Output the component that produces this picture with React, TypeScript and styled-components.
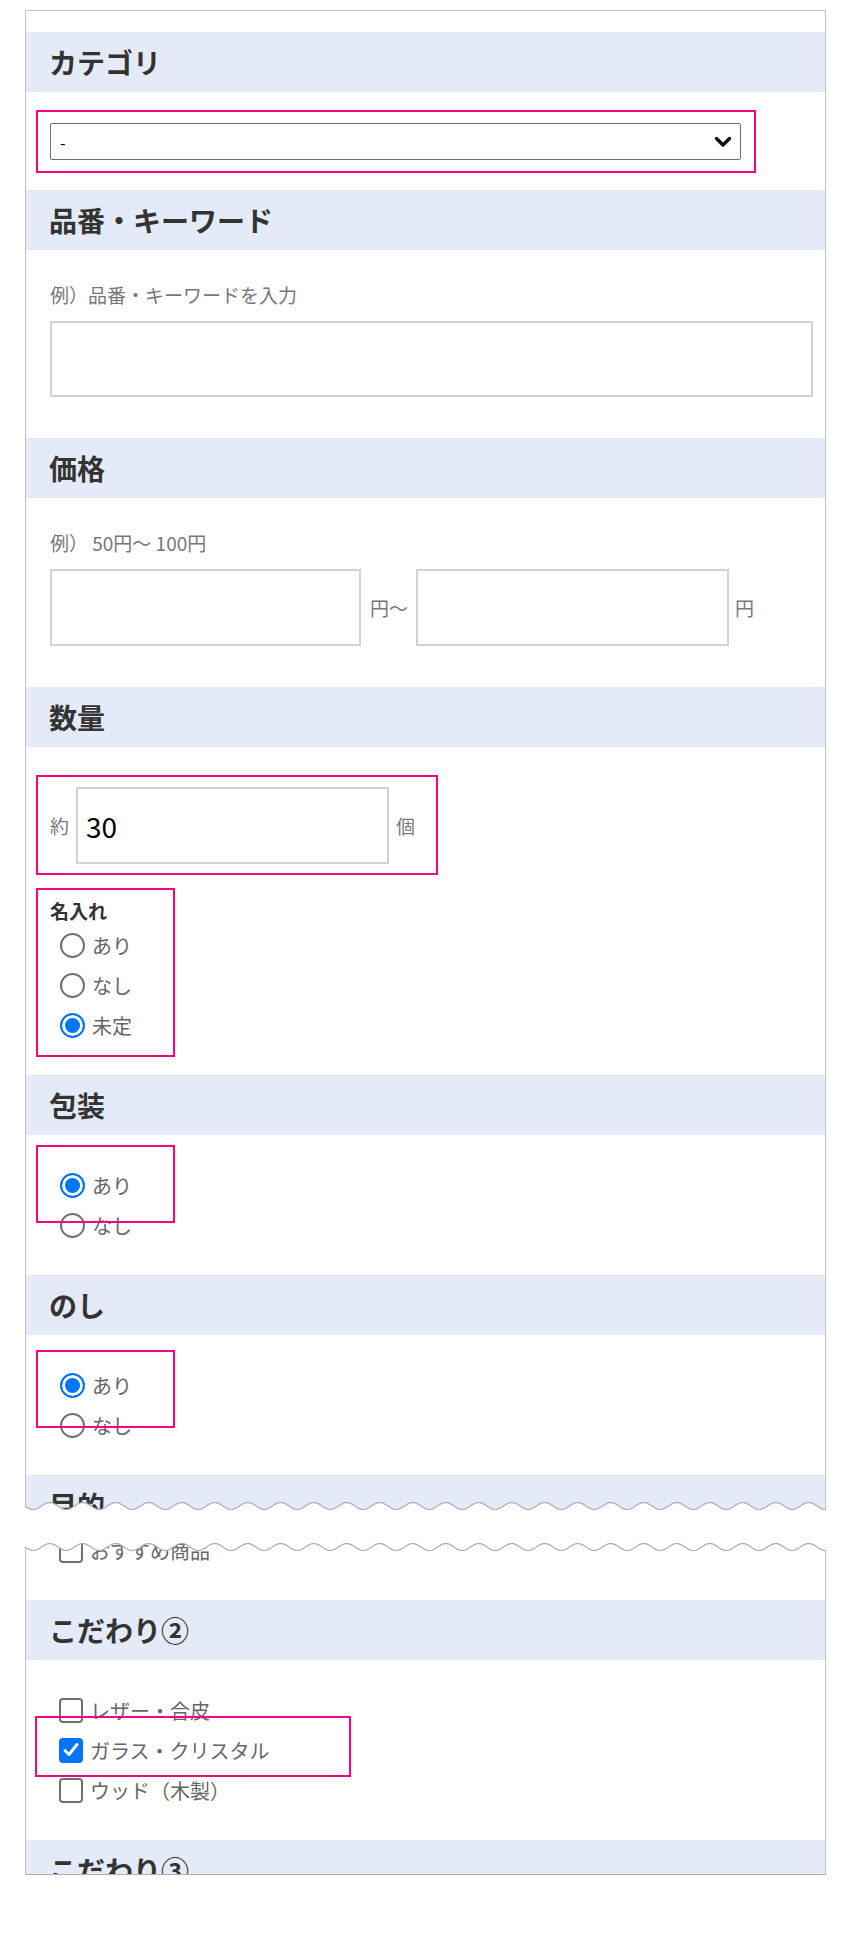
import React from 'react';
import styled, { createGlobalStyle } from 'styled-components';

const CARD_W = 801;
const WAVE_P = 33;
const WAVE_A = 3.5;

const waveY = (x: number, base: number) => base + WAVE_A * Math.sin((2 * Math.PI * x) / WAVE_P);

const wavePts = (base: number, reverse: boolean) => {
  const pts: string[] = [];
  for (let x = 0; x <= CARD_W; x += 1) pts.push(`${x}px ${waveY(x, base).toFixed(2)}px`);
  return reverse ? pts.reverse() : pts;
};

const topClip = (base: number) =>
  `polygon(0px -2px, ${CARD_W}px -2px, ${wavePts(base, true).join(', ')})`;

const bottomClip = (base: number, h: number) =>
  `polygon(${wavePts(base, false).join(', ')}, ${CARD_W}px ${h + 2}px, 0px ${h + 2}px)`;

const wavePath = (mid: number) => {
  let d = `M0 ${waveY(0, mid).toFixed(2)}`;
  for (let x = 1; x <= CARD_W; x += 1) d += ` L${x} ${waveY(x, mid).toFixed(2)}`;
  return d;
};

const GlobalStyle = createGlobalStyle`
  html, body { margin: 0; padding: 0; background: #fff; }
  body { font-family: "Noto Sans CJK JP", "Noto Sans", sans-serif; color: #333; }
  * { box-sizing: border-box; }
`;

const Page = styled.div`
  width: 850px;
  padding: 10px 0 0 25px;
  display: flex;
  flex-direction: column;
`;

const Fragment = styled.div<{ $h: number; $mt?: number }>`
  position: relative;
  width: ${CARD_W}px;
  height: ${(p) => p.$h}px;
  margin-top: ${(p) => p.$mt ?? 0}px;
`;

const Clip = styled.div`
  height: 100%;
`;

const Card = styled.div<{ $top?: boolean; $bottom?: boolean }>`
  height: 100%;
  overflow: hidden;
  background: #fff;
  border-left: 1px solid #c4c4c4;
  border-right: 1px solid #c4c4c4;
  border-top: ${(p) => (p.$top ? '1px solid #c4c4c4' : 'none')};
  border-bottom: ${(p) => (p.$bottom ? '1px solid #aeb0b8' : 'none')};
  padding-top: ${(p) => (p.$top ? 21 : 0)}px;
`;

const WaveSvg = styled.svg<{ $top: number }>`
  position: absolute;
  left: 0;
  top: ${(p) => p.$top}px;
  width: ${CARD_W}px;
  height: 16px;
  overflow: visible;
  pointer-events: none;
`;

const Header = styled.h2`
  margin: 0;
  height: 60px;
  display: flex;
  align-items: center;
  padding-left: 23px;
  background: #e4eaf7;
  font-size: 28px;
  font-weight: 700;
  line-height: 1;
  color: #333;
`;

const Body = styled.div<{ $pt: number; $pb: number }>`
  position: relative;
  padding: ${(p) => p.$pt}px 12px ${(p) => p.$pb}px 24px;
`;

const Mark = styled.div<{ $t: number; $l: number; $w: number; $h: number }>`
  position: absolute;
  top: ${(p) => p.$t}px;
  left: ${(p) => p.$l}px;
  width: ${(p) => p.$w}px;
  height: ${(p) => p.$h}px;
  border: 2px solid #f5057f;
  pointer-events: none;
`;

const SelectWrap = styled.div`
  position: relative;
  width: 691px;
  height: 37px;
`;

const Select = styled.select`
  appearance: none;
  width: 100%;
  height: 100%;
  border: 1px solid #6f6f6f;
  border-radius: 2px;
  background: #fff;
  padding: 0 0 0 9px;
  font-family: "Noto Sans CJK JP", sans-serif;
  font-size: 16px;
  color: #000;
`;

const Chevron = styled.svg`
  position: absolute;
  right: 9px;
  top: 50%;
  transform: translateY(-50%);
  pointer-events: none;
`;

const Hint = styled.div`
  font-size: 19px;
  line-height: 28px;
  color: #777;
  margin-bottom: 12px;
`;

const TextBox = styled.input<{ $w: number; $h: number }>`
  display: block;
  flex: none;
  width: ${(p) => p.$w}px;
  height: ${(p) => p.$h}px;
  border: 2px solid #d2d2d2;
  background: #fff;
  padding: 0 8px;
  font-family: "Noto Sans CJK JP", sans-serif;
  font-size: 28px;
  color: #000;
  outline: none;
`;

const Row = styled.div`
  display: flex;
  align-items: center;
`;

const Unit = styled.span<{ $ml: number; $mr?: number }>`
  font-size: 19px;
  color: #777;
  margin-left: ${(p) => p.$ml}px;
  margin-right: ${(p) => p.$mr ?? 0}px;
  white-space: nowrap;
`;

const GroupLabel = styled.div`
  margin-top: 33px;
  font-size: 19px;
  font-weight: 700;
  line-height: 28px;
  color: #333;
`;

const Option = styled.label<{ $pl?: number }>`
  display: flex;
  align-items: center;
  height: 40px;
  padding-left: ${(p) => p.$pl ?? 10}px;
  gap: 7px;
  font-size: 20px;
  color: #666;
`;

const RadioInput = styled.input`
  appearance: none;
  margin: 0;
  flex: none;
  width: 25px;
  height: 25px;
  border-radius: 50%;
  border: 2px solid #707070;
  background: #fff;
  &:checked {
    border-color: #0075ff;
    background: #0075ff;
    box-shadow: inset 0 0 0 3px #fff;
  }
`;

const CheckBox = styled.span<{ $on?: boolean }>`
  flex: none;
  width: 24px;
  height: 25px;
  border-radius: 4px;
  border: 2px solid ${(p) => (p.$on ? '#0075ff' : '#707070')};
  background: ${(p) => (p.$on ? '#0075ff' : '#fff')};
  display: flex;
  align-items: center;
  justify-content: center;
`;

const Radio = ({ name, label, checked }: { name: string; label: string; checked?: boolean }) => (
  <Option>
    <RadioInput type="radio" name={name} defaultChecked={checked} />
    {label}
  </Option>
);

const Check = ({ label, checked }: { label: string; checked?: boolean }) => (
  <Option $pl={9}>
    <CheckBox $on={checked}>
      {checked && (
        <svg width="18" height="18" viewBox="0 0 18 18">
          <path d="M3 9.5 L7 13.5 L15 3.5" fill="none" stroke="#fff" strokeWidth="3" strokeLinecap="round" strokeLinejoin="round" />
        </svg>
      )}
    </CheckBox>
    {label}
  </Option>
);

const TOP_H = 1502;
const TOP_BASE = 1496;
const BOT_H = 345;
const BOT_BASE = 17;

export default function App() {
  return (
    <>
      <GlobalStyle />
      <Page>
        <Fragment $h={TOP_H}>
          <Clip style={{ clipPath: topClip(TOP_BASE) }}>
            <Card $top>
              <Header>カテゴリ</Header>
              <Body $pt={31} $pb={30}>
                <SelectWrap>
                  <Select defaultValue="-">
                    <option value="-">-</option>
                  </Select>
                  <Chevron width="18" height="12" viewBox="0 0 18 12">
                    <path d="M2.5 2.5 L9 9 L15.5 2.5" fill="none" stroke="#111" strokeWidth="3.4" strokeLinecap="round" strokeLinejoin="round" />
                  </Chevron>
                </SelectWrap>
                <Mark $t={18} $l={10} $w={720} $h={63} />
              </Body>

              <Header>品番・キーワード</Header>
              <Body $pt={31} $pb={41}>
                <Hint>例）品番・キーワードを入力</Hint>
                <TextBox type="text" $w={763} $h={76} />
              </Body>

              <Header>価格</Header>
              <Body $pt={31} $pb={41}>
                <Hint>例） 50円～ 100円</Hint>
                <Row>
                  <TextBox type="text" $w={311} $h={77} />
                  <Unit $ml={9} $mr={8}>円～</Unit>
                  <TextBox type="text" $w={313} $h={77} />
                  <Unit $ml={6}>円</Unit>
                </Row>
              </Body>

              <Header>数量</Header>
              <Body $pt={40} $pb={30}>
                <Row>
                  <Unit $ml={0} $mr={7}>約</Unit>
                  <TextBox type="text" $w={313} $h={77} defaultValue="30" />
                  <Unit $ml={7}>個</Unit>
                </Row>
                <GroupLabel>名入れ</GroupLabel>
                <Radio name="naire" label="あり" />
                <Radio name="naire" label="なし" />
                <Radio name="naire" label="未定" checked />
                <Mark $t={28} $l={10} $w={402} $h={100} />
                <Mark $t={141} $l={10} $w={139} $h={169} />
              </Body>

              <Header>包装</Header>
              <Body $pt={30} $pb={30}>
                <Radio name="hoso" label="あり" checked />
                <Radio name="hoso" label="なし" />
                <Mark $t={10} $l={10} $w={139} $h={78} />
              </Body>

              <Header>のし</Header>
              <Body $pt={30} $pb={30}>
                <Radio name="noshi" label="あり" checked />
                <Radio name="noshi" label="なし" />
                <Mark $t={15} $l={10} $w={139} $h={78} />
              </Body>

              <Header>目的</Header>
              <Body $pt={30} $pb={30}>
                <Check label="ギフト" />
                <Check label="記念品" />
              </Body>
            </Card>
          </Clip>
          <WaveSvg $top={TOP_BASE - 8} viewBox={`0 0 ${CARD_W} 16`}>
            <path d={wavePath(8)} fill="none" stroke="#a9acb6" strokeWidth="1.2" />
          </WaveSvg>
        </Fragment>

        <Fragment $h={BOT_H} $mt={18}>
          <Clip style={{ clipPath: bottomClip(BOT_BASE, BOT_H) }}>
            <Card $bottom>
              <Body $pt={0} $pb={30}>
                <Check label="おすすめ商品" />
              </Body>

              <Header>こだわり②</Header>
              <Body $pt={30} $pb={30}>
                <Check label="レザー・合皮" />
                <Check label="ガラス・クリスタル" checked />
                <Check label="ウッド（木製）" />
                <Mark $t={56} $l={9} $w={316} $h={61} />
              </Body>

              <Header>こだわり③</Header>
              <Body $pt={30} $pb={30}>
                <Check label="メタル" />
              </Body>
            </Card>
          </Clip>
          <WaveSvg $top={BOT_BASE - 8} viewBox={`0 0 ${CARD_W} 16`}>
            <path d={wavePath(8)} fill="none" stroke="#a9acb6" strokeWidth="1.2" />
          </WaveSvg>
        </Fragment>
      </Page>
    </>
  );
}
